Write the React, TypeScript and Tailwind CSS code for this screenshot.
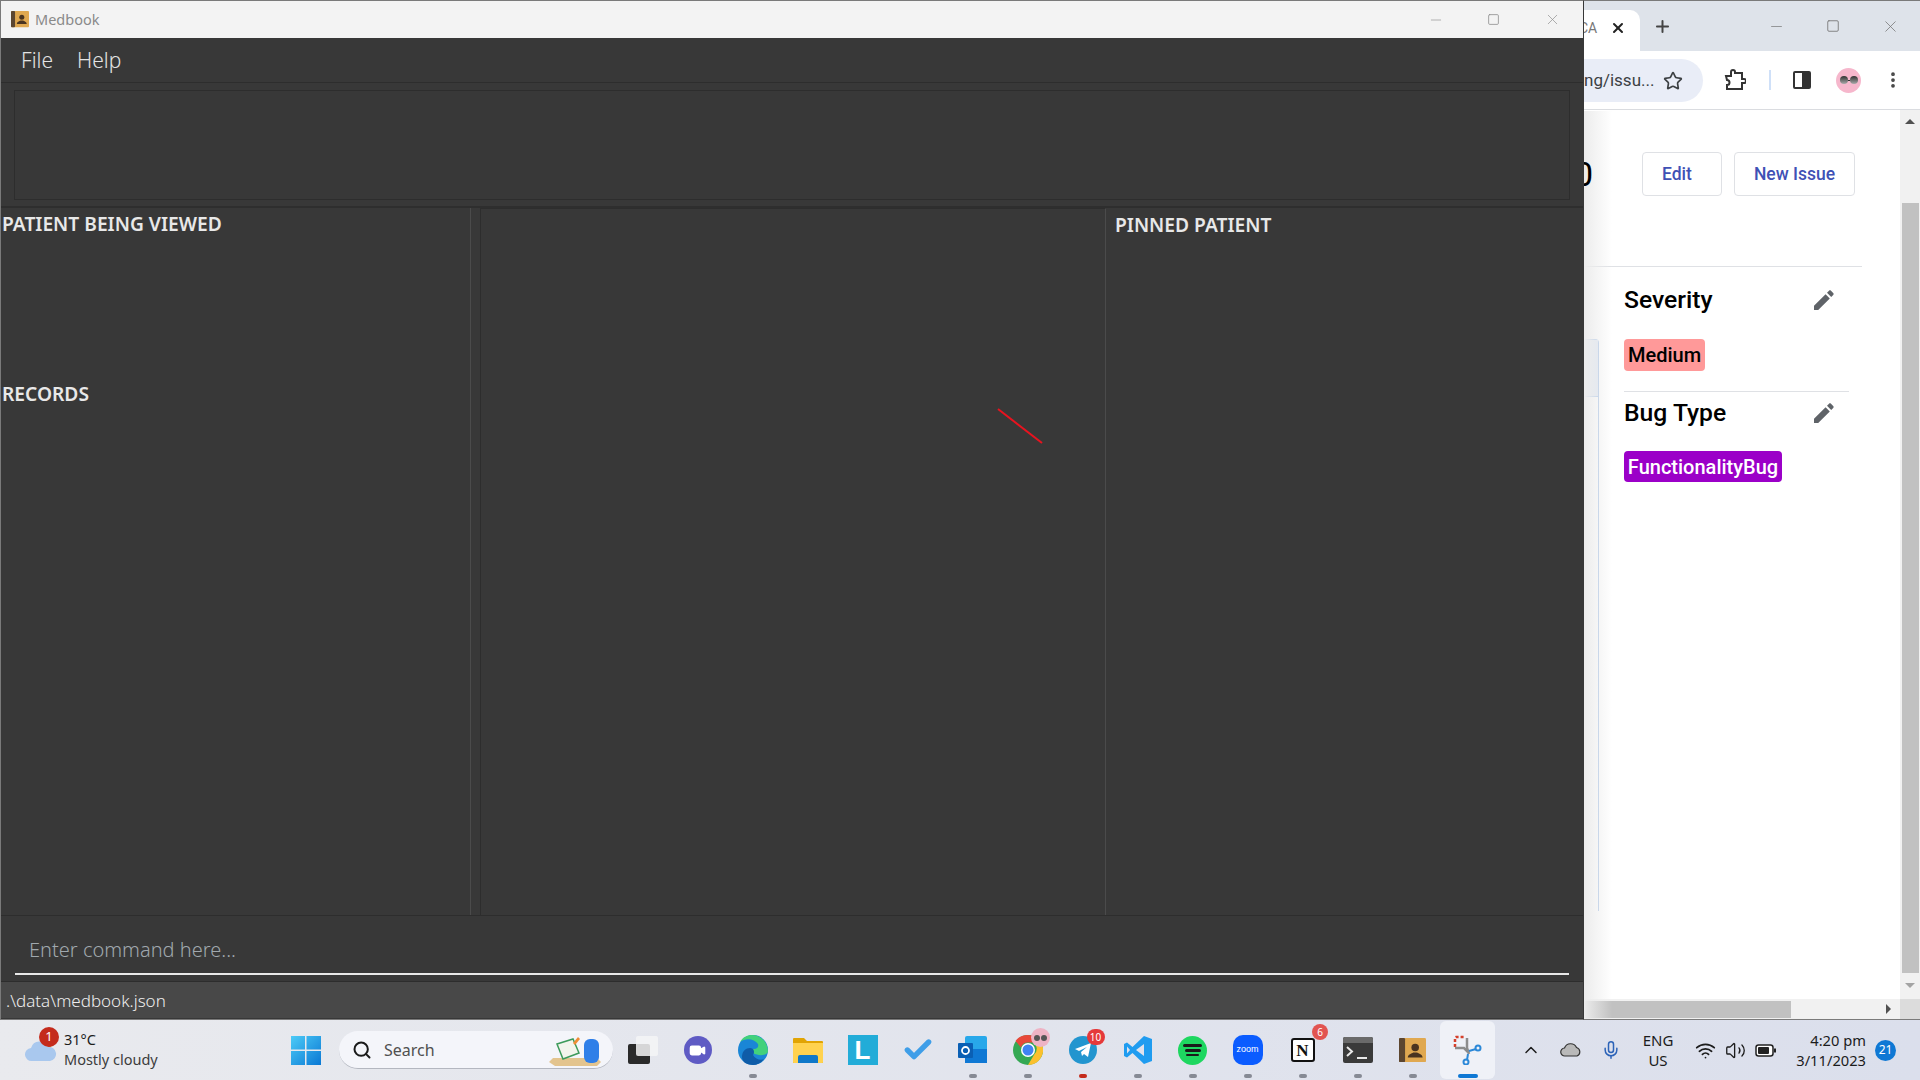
import { Check, ChevronUp, Mic, Minus, MoreVertical, Plus, Search, Square, Star, Video, Volume2, Wifi, X } from "lucide-react";

// Medbook window over a Chrome window, with the Windows 11 taskbar below.

function Pencil() {
  return (
    <svg width="20" height="20" viewBox="0 0 20 20" fill="#5f6368">
      <path d="M0 20v-4.2L11.6 4.2l4.2 4.2L4.2 20zM13 2.8 15 .8c.6-.6 1.400-.6 2 0l2.200 2.200c.6.6.6 1.400 0 2l-2 2z" />
    </svg>
  );
}

function BookIcon({ size }: { size: number }) {
  return (
    <svg width={size} height={size * 0.9} viewBox="0 0 20 18">
      <rect width="20" height="18" rx="1" fill="#e0a850" />
      <rect width="4.500" height="18" rx="1" fill="#5c4630" />
      <circle cx="12" cy="7" r="2.800" fill="#4a3420" />
      <path d="M6.500 14.500c0-2.500 3-3 4-3.800h3c1 .8 4 1.300 4 3.800z" fill="#4a3420" />
    </svg>
  );
}

function WinLogo() {
  return (
    <svg width="30" height="30" viewBox="0 0 30 30">
      <defs>
        <linearGradient id="win" x1="0" y1="0" x2="1" y2="1">
          <stop offset="0" stopColor="#4ccbf7" />
          <stop offset="1" stopColor="#0a78d4" />
        </linearGradient>
      </defs>
      <path d="M0 1h14v13.500H0zM15.500 1H30v13.500H15.500zM0 16h14v14H0zM15.500 16H30v14H15.500z" fill="url(#win)" />
    </svg>
  );
}

function TaskIcon({ children, dot, active }: { children: React.ReactNode; dot?: string; active?: boolean }) {
  return (
    <div className={`relative flex h-full w-[55px] items-center justify-center ${active ? "rounded-md bg-[#eff1f7]" : ""}`}>
      <div className="flex h-[32px] w-[32px] items-center justify-center">{children}</div>
      {dot ? <span className={`absolute bottom-[1px] h-[4px] rounded-full ${active ? "w-[20px]" : "w-[8px]"}`} style={{ background: dot }} /> : null}
    </div>
  );
}

function Badge({ n, color }: { n: string; color: string }) {
  return (
    <span className="absolute right-[2px] top-[3px] flex h-[16px] min-w-[16px] items-center justify-center rounded-full text-[10px] text-white" style={{ background: color }}>
      {n}
    </span>
  );
}

function Taskbar() {
  const gray = "#868a94";
  return (
    <div className="flex h-[60px] items-center bg-gradient-to-r from-[#e9eaee] to-[#dbdfec] font-['Noto_Sans',sans-serif] text-[#1c1c1c]">
      <div className="relative flex w-[281px] items-center pl-[25px]">
        <svg width="32" height="24" viewBox="0 0 32 24">
          <circle cx="22" cy="6" r="5" fill="#ef8c34" />
          <path d="M7 23a6.500 6.500 0 0 1-1-13 9 9 0 0 1 17-1 7 7 0 0 1 2 14z" fill="#a9c8ee" />
        </svg>
        <span className="absolute left-[39px] top-[-4px] flex h-[20px] w-[20px] items-center justify-center rounded-full bg-[#c42b1c] text-[13px] text-white">1</span>
        <div className="ml-[7px] mt-[-2px] text-[14.500px] leading-[20px]">
          <div>31°C</div>
          <div className="text-[#3c3c3c]">Mostly cloudy</div>
        </div>
      </div>
      <div className="flex w-[50px] justify-center">
        <WinLogo />
      </div>
      <div className="ml-[8px] flex h-[38px] w-[274px] items-center rounded-full border-b border-[#b4b7c0] bg-[#f4f5fa] pl-[13px]">
        <Search size={20} strokeWidth={2.400} color="#1a1a1a" />
        <span className="ml-[12px] text-[16px] text-[#505050]">Search</span>
        <svg className="ml-auto mr-[8px]" width="58" height="36" viewBox="0 0 58 36">
          <path d="M2 30 6 26h44l4 4-4 4H8z" fill="#e3c48e" />
          <path d="M10 12l16-5 6 14-16 6z" fill="#f2f4ec" stroke="#3d9a5a" strokeWidth="1.500" />
          <rect x="37" y="7" width="15" height="24" rx="6" fill="#2f7fe8" />
          <path d="M26 11l5-6 2 2-5 6z" fill="#ef8c34" />
        </svg>
      </div>
      <div className="ml-[2px] flex h-[58px] items-center">
        <TaskIcon>
          <svg width="30" height="30" viewBox="0 0 30 30">
            <rect x="0" y="9" width="22" height="20" rx="2" fill="#2a2a2a" />
            <rect x="8" y="1" width="22" height="20" rx="2" fill="#f4f4f6" fillOpacity=".85" />
          </svg>
        </TaskIcon>
        <TaskIcon>
          <div className="flex h-[28px] w-[28px] items-center justify-center rounded-full bg-[#5f5bc4]">
            <Video size={17} fill="#fff" color="#fff" />
          </div>
        </TaskIcon>
        <TaskIcon dot={gray}>
          <svg width="30" height="30" viewBox="0 0 30 30">
            <circle cx="15" cy="15" r="15" fill="#1a86d6" />
            <path d="M30 17C30 7 23 0 14 0 9 0 5 2 2 7c5-4 14-4 18 2 1 3-1 5-4 5-2 0-3 2-1 4 5 3 13 3 15-1z" fill="#42d17c" />
            <path d="M4 22c0-6 4-9 8-9s5 4 3 7c2 4 8 6 11 4-3 4-7 6-11 6-6 0-11-3-11-8z" fill="#0f5ca8" />
          </svg>
        </TaskIcon>
        <TaskIcon>
          <svg width="30" height="28" viewBox="0 0 30 28">
            <path d="M0 3a1 1 0 0 1 1-1h10l3 3h15a1 1 0 0 1 1 1v20a1 1 0 0 1-1 1H1a1 1 0 0 1-1-1z" fill="#e1a404" />
            <path d="M0 7h30v19a1 1 0 0 1-1 1H1a1 1 0 0 1-1-1z" fill="#ffd24f" />
            <path d="M5 27v-6a2 2 0 0 1 2-2h16a2 2 0 0 1 2 2v6z" fill="#0f78c9" />
          </svg>
        </TaskIcon>
        <TaskIcon>
          <div className="flex h-[30px] w-[30px] items-center justify-center bg-[#22acd8] font-['Liberation_Sans',sans-serif] text-[26px] font-bold leading-none text-white">L</div>
        </TaskIcon>
        <TaskIcon>
          <Check size={32} strokeWidth={4} color="#3f9ee8" />
        </TaskIcon>
        <TaskIcon dot={gray}>
          <svg width="30" height="28" viewBox="0 0 30 28">
            <rect x="7" y="0" width="22" height="27" rx="2" fill="#28a8ea" />
            <rect x="7" y="13" width="22" height="14" fill="#0f78d4" />
            <rect x="0" y="7" width="15" height="15" rx="1" fill="#0a5fb4" />
            <circle cx="7.500" cy="14.500" r="3.500" fill="none" stroke="#fff" strokeWidth="1.800" />
          </svg>
        </TaskIcon>
        <TaskIcon dot={gray}>
          <div className="relative">
            <svg width="30" height="30" viewBox="0 0 30 30">
              <circle cx="15" cy="15" r="15" fill="#34a853" />
              <path d="M15 0a15 15 0 0 1 13 7.500H15a7.500 7.500 0 0 0-7 5L2.500 6A15 15 0 0 1 15 0z" fill="#e8483a" />
              <path d="M28 7.500A15 15 0 0 1 15 30l6.500-11a7.500 7.500 0 0 0-1-11.500z" fill="#fbc02d" />
              <circle cx="15" cy="15" r="7" fill="#fff" />
              <circle cx="15" cy="15" r="5.500" fill="#3f83f2" />
            </svg>
            <span className="absolute right-[-7px] top-[-7px] flex h-[19px] w-[19px] items-center justify-center rounded-full bg-[#eeb3c4]">
              <span className="h-[6px] w-[6px] rounded-full bg-[#555]" />
              <span className="ml-[1px] h-[6px] w-[6px] rounded-full bg-[#555]" />
            </span>
          </div>
        </TaskIcon>
        <TaskIcon dot="#c42b1c">
          <div className="relative flex h-[28px] w-[28px] items-center justify-center rounded-full bg-[#2295cf]">
            <svg width="16" height="14" viewBox="0 0 16 14">
              <path d="M0 6 16 0l-3 14-4-3-2 2-1-4 6-5-8 4z" fill="#fff" />
            </svg>
            <span className="absolute right-[-8px] top-[-7px] flex h-[16px] w-[18px] items-center justify-center rounded-full bg-[#e5393a] text-[10px] text-white">10</span>
          </div>
        </TaskIcon>
        <TaskIcon dot={gray}>
          <svg width="30" height="30" viewBox="0 0 30 30">
            <path d="M21 1 9.500 12 4 7.500 1 9v12l3 1.500L9.500 18 21 29l8-3V4z" fill="#1f9cf0" />
            <path d="M21 9v12l-8-6zM4 11.500 7 15l-3 3.500z" fill="#dfe2ed" />
          </svg>
        </TaskIcon>
        <TaskIcon dot={gray}>
          <div className="flex h-[29px] w-[29px] flex-col items-center justify-center gap-[2px] rounded-full bg-[#1ed760]">
            <span className="h-[3px] w-[19px] rounded-full bg-[#1a1a1a]" />
            <span className="h-[3px] w-[16px] rounded-full bg-[#1a1a1a]" />
            <span className="h-[2px] w-[13px] rounded-full bg-[#1a1a1a]" />
          </div>
        </TaskIcon>
        <TaskIcon dot={gray}>
          <div className="flex h-[30px] w-[30px] items-center justify-center rounded-[10px] bg-[#0b5cff] font-['Liberation_Sans',sans-serif] text-[9px] text-white">zoom</div>
        </TaskIcon>
        <TaskIcon dot={gray}>
          <div className="flex h-[24px] w-[24px] items-center justify-center rounded-[3px] border-2 border-[#111] bg-white font-['Liberation_Serif',serif] text-[17px] font-bold leading-none text-[#111]">N</div>
          <Badge n="6" color="#e25450" />
        </TaskIcon>
        <TaskIcon dot={gray}>
          <div className="relative h-[26px] w-[30px] rounded-[2px] bg-[#3a3a3a]">
            <div className="h-[6px] rounded-t-[2px] bg-[#6a6a6a]" />
            <svg className="absolute left-[3px] top-[9px]" width="22" height="14" viewBox="0 0 22 14" fill="none" stroke="#e8e8e8" strokeWidth="2">
              <path d="M1 1l5 4.500L1 10M11 12h10" />
            </svg>
          </div>
        </TaskIcon>
        <TaskIcon dot={gray}>
          <BookIcon size={27} />
        </TaskIcon>
        <TaskIcon dot="#0f78d4" active>
          <svg width="30" height="30" viewBox="0 0 30 30" fill="none">
            <path d="M2 12V3a1 1 0 0 1 1-1h9" stroke="#d5402b" strokeWidth="2.500" strokeDasharray="3 2" />
            <path d="M2 13h9l4 4" stroke="#8c8c8c" strokeWidth="2.500" />
            <path d="M14 3v10l2 6" stroke="#8c8c8c" strokeWidth="2.500" />
            <circle cx="25" cy="13" r="2.500" stroke="#2b88d8" strokeWidth="2" />
            <circle cx="13" cy="27" r="2.500" stroke="#2b88d8" strokeWidth="2" />
            <path d="M16 16l7-2M15 19l-1 6" stroke="#2b88d8" strokeWidth="2" />
          </svg>
        </TaskIcon>
      </div>
      <div className="ml-[26px] flex items-center text-[#1c1c1c]">
        <ChevronUp size={20} strokeWidth={1.800} />
        <svg className="ml-[19px]" width="22" height="14" viewBox="0 0 22 14">
          <path d="M5 13a4 4 0 0 1-.5-8 6.500 6.500 0 0 1 12-.5A4.500 4.500 0 0 1 17 13z" fill="#b9b9b9" stroke="#333" strokeWidth="1.200" />
        </svg>
        <Mic className="ml-[19px]" size={20} color="#2c63b8" strokeWidth={1.800} />
        <div className="ml-[15px] w-[44px] text-center text-[15px] leading-[20px]">
          <div>ENG</div>
          <div>US</div>
        </div>
        <Wifi className="ml-[15px]" size={21} strokeWidth={2} />
        <Volume2 className="ml-[9px]" size={21} strokeWidth={1.500} />
        <svg className="ml-[9px]" width="21" height="13" viewBox="0 0 21 13">
          <rect x="1" y="1" width="17" height="11" rx="2.500" fill="#fff" stroke="#222" strokeWidth="1.500" />
          <rect x="3" y="3" width="11" height="7" rx="1" fill="#222" />
          <rect x="19" y="4.500" width="2" height="4" fill="#222" />
        </svg>
        <div className="ml-[11px] w-[79px] text-right text-[14.700px] leading-[20px]">
          <div>4:20 pm</div>
          <div>3/11/2023</div>
        </div>
        <span className="ml-[9px] flex h-[21px] w-[21px] items-center justify-center rounded-full bg-[#0f78d4] text-[12px] text-white">21</span>
      </div>
    </div>
  );
}

function Medbook() {
  return (
    <div className="relative z-10 flex w-[1584px] flex-col border-x border-b border-t border-[#7a7a7a] border-r-[#383838] bg-[#383838] font-['Noto_Sans',sans-serif]">
      <div className="flex h-[37px] items-center bg-[#f3f3f3] pl-[10px] text-[#8a8a8a]">
        <BookIcon size={18} />
        <span className="ml-[6px] text-[14.500px]">Medbook</span>
        <div className="ml-auto flex items-center text-[#8f8f8f]">
          <Minus size={16} strokeWidth={1} />
          <Square className="ml-[43px]" size={13} strokeWidth={1.500} />
          <X className="ml-[44px] mr-[22px]" size={17} strokeWidth={1} />
        </div>
      </div>
      <div className="flex h-[45px] items-center border-b border-[#2d2d2d] pl-[20px] pt-[1px] text-[21px] font-light text-[#e4e4e4]">
        <span>File</span>
        <span className="ml-[24px]">Help</span>
      </div>
      <div className="h-[125px] border-b-2 border-[#2e2e2e] px-[13px] pb-[6px] pt-[7px]">
        <div className="h-full border border-[#2d2d2d]" />
      </div>
      <div className="flex h-[708px] border-b border-[#2d2d2d]">
        <div className="flex w-[470px] flex-col border-r border-[#4b4b4b] pl-[1px] text-[19.200px] font-semibold leading-[26px] text-[#e8e8e8]">
          <div className="mt-[3px] h-[170px]">PATIENT BEING VIEWED</div>
          <div>RECORDS</div>
        </div>
        <div className="ml-[9px] w-[626px] border-x border-t border-[#2d2d2d] border-r-[#4b4b4b]" />
        <div className="ml-[9px] mt-[4px] text-[19.200px] font-semibold leading-[26px] text-[#e8e8e8]">PINNED PATIENT</div>
      </div>
      <div className="h-[66px] border-b border-[#2d2d2d] px-[14px] pt-[17px]">
        <div className="h-[42px] border-b-2 border-[#e8e8e8] pl-[14px] text-[20px] font-light leading-[33px] text-[#a0a8ae]">Enter command here...</div>
      </div>
      <div className="flex h-[36px] items-center bg-[#484848] pl-[5px] pt-[1px] text-[17px] font-light text-[#eeeeee]">.\data\medbook.json</div>
      <svg className="absolute left-[996px] top-[407px]" width="46" height="36" viewBox="0 0 46 36">
        <path d="M1 1 45 35" stroke="#e8131f" strokeWidth="2" />
      </svg>
    </div>
  );
}

function Chrome() {
  return (
    <div className="relative flex flex-1 flex-col border-b border-t border-[#7a7a7a] bg-white font-['Roboto',sans-serif]">
      <div className="flex h-[50px] items-end bg-[#dee3ea]">
        <div className="flex h-[41px] w-[56px] items-center rounded-tr-[10px] bg-white pb-[5px] text-[14px] text-[#777]">
          <span className="ml-[-5px]">CA</span>
          <X className="ml-[13px]" size={16} strokeWidth={3} color="#222" />
        </div>
        <div className="flex h-full flex-1 items-center text-[#444]">
          <Plus className="ml-[13px]" size={19} strokeWidth={2.500} />
          <Minus className="ml-[96px]" size={17} strokeWidth={1} color="#777" />
          <Square className="ml-[41px]" size={14} strokeWidth={1.500} color="#777" />
          <X className="ml-[41px]" size={19} strokeWidth={1} color="#777" />
        </div>
      </div>
      <div className="flex h-[59px] items-center rounded-tr-[8px] border-b border-[#dadce0] bg-white text-[#444]">
        <div className="flex h-[43px] w-[119px] items-center rounded-r-full bg-[#e9edf7] pt-[1px] text-[17px] text-[#3c4043]">
          <span>ng/issu...</span>
          <Star className="ml-[9px]" size={20} strokeWidth={2} />
        </div>
        <svg className="ml-[21px]" width="22" height="22" viewBox="0 0 22 22" fill="none" stroke="#333" strokeWidth="2">
          <path d="M2 7h5V3a2 2 0 0 1 4 0v1h7v6h2a2 2 0 0 1 0 4h-2v6H3v-4a2.500 2.500 0 0 0 0-5z" />
        </svg>
        <span className="ml-[23px] h-[20px] w-[2px] bg-[#cfe0f8]" />
        <div className="ml-[22px] flex h-[18px] w-[18px] justify-start rounded-[2px] border-2 border-[#333] bg-[#333]">
          <span className="h-full w-[7px] bg-white" />
        </div>
        <div className="ml-[25px] flex h-[25px] w-[25px] items-center justify-center rounded-full bg-[#f6b7cc]">
          <span className="h-[8px] w-[8px] rounded-full bg-gradient-to-b from-[#333] to-[#aaa]" />
          <span className="h-[1px] w-[2px] bg-[#333]" />
          <span className="h-[8px] w-[8px] rounded-full bg-gradient-to-b from-[#333] to-[#aaa]" />
        </div>
        <MoreVertical className="ml-[22px]" size={20} strokeWidth={2.500} />
      </div>
      <div className="flex flex-1">
        <div className="flex flex-1 flex-col">
          <div className="flex h-[156px] flex-col">
            <div className="mt-[42px] flex h-[44px] items-center">
              <span className="relative z-[1] ml-[-10px] w-[21px] text-[34px] text-black">0</span>
              <span className="ml-[47px] flex h-[44px] w-[80px] items-center rounded-[4px] border border-[#dfe1e5] pl-[19px] text-[17.500px] font-medium text-[#3f51b5]">Edit</span>
              <span className="ml-[12px] flex h-[44px] w-[121px] items-center justify-center rounded-[4px] border border-[#dfe1e5] text-[17.500px] font-medium text-[#3f51b5]">New Issue</span>
            </div>
          </div>
          <div className="w-[278px] border-t border-[#dfe1e5]" />
          <div className="flex flex-1">
            <div className="w-[40px]">
              <div className="mt-[72px] h-[572px] w-[15px] rounded-tr-[4px] border-r border-t border-[#a9c4e8]">
                <div className="h-[57px] border-b border-[#a9c4e8] bg-[#dfe7f3]" />
              </div>
            </div>
            <div className="flex-1 pr-[10px] text-black">
              <div className="mt-[17px] flex w-[223px] items-center justify-between pr-[13px] text-[24.700px] font-medium leading-[32px]">
                <span>Severity</span>
                <Pencil />
              </div>
              <span className="mt-[23px] flex h-[32px] w-[81px] items-center justify-center rounded-[4px] bg-[#ff9999] text-[20px] font-medium">Medium</span>
              <div className="mt-[20px] w-[225px] border-t border-[#dfe1e5]" />
              <div className="mt-[5px] flex w-[223px] items-center justify-between pr-[13px] text-[24.700px] font-medium leading-[32px]">
                <span>Bug Type</span>
                <Pencil />
              </div>
              <span className="mt-[22px] flex h-[31px] w-[158px] items-center justify-center rounded-[4px] bg-[#9b00c8] text-[20px] font-medium text-white">FunctionalityBug</span>
            </div>
          </div>
          <div className="flex h-[20px] items-center bg-[#f1f1f1]">
            <div className="h-[17px] w-[207px] bg-[#c1c1c1]" />
            <span className="ml-auto mr-[9px] h-0 w-0 border-y-[5px] border-l-[5px] border-y-transparent border-l-[#505050]" />
          </div>
        </div>
        <div className="flex w-[20px] flex-col items-center bg-[#f1f1f1]">
          <span className="mt-[9px] h-0 w-0 border-x-[5px] border-b-[5px] border-x-transparent border-b-[#505050]" />
          <div className="mt-[79px] h-[770px] w-[17px] bg-[#c1c1c1]" />
          <span className="mt-[10px] h-0 w-0 border-x-[5px] border-t-[5px] border-x-transparent border-t-[#a3a3a3]" />
          <div className="mt-auto h-[20px] w-full bg-[#dcdcdc]" />
        </div>
      </div>
      <div className="pointer-events-none absolute bottom-0 left-0 top-[110px] w-[28px] bg-gradient-to-r from-[#ececec] to-transparent" />
    </div>
  );
}

export default function App() {
  return (
    <div className="flex h-[1080px] w-[1920px] flex-col overflow-hidden">
      <div className="flex h-[1020px]">
        <Medbook />
        <Chrome />
      </div>
      <Taskbar />
    </div>
  );
}
